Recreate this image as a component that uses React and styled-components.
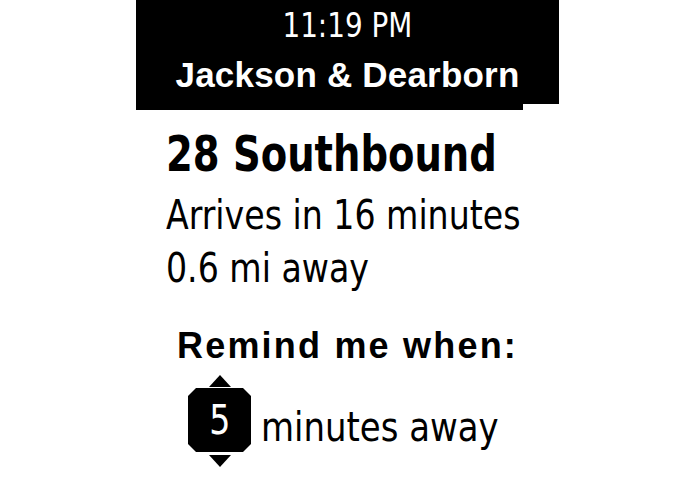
import React from "react";
import styled, { createGlobalStyle } from "styled-components";

const Global = createGlobalStyle`
  html, body { margin: 0; padding: 0; background: #fff; }
  body { font-family: "DejaVu Sans Condensed", "DejaVu Sans", sans-serif; }
`;

const Page = styled.div`
  width: 695px;
  height: 494px;
  display: flex;
  justify-content: center;
  background: #fff;
  overflow: hidden;
`;

const Screen = styled.div`
  width: 423px;
  height: 494px;
  flex-shrink: 0;
  display: flex;
  flex-direction: column;
  background: #fff;
  color: #000;
`;

const StatusBar = styled.header`
  flex-shrink: 0;
  height: 104px;
  background: #000;
  color: #fff;
  display: flex;
  flex-direction: column;
  align-items: center;
  padding-top: 8px;
  box-sizing: border-box;
`;

const StatusFoot = styled.div`
  flex-shrink: 0;
  width: 387px;
  height: 6px;
  background: #000;
`;

const Time = styled.div`
  font-family: "DejaVu Sans Condensed", "DejaVu Sans", sans-serif;
  font-size: 34px;
  line-height: 34px;
  white-space: nowrap;
  transform: scaleX(0.91);
  transform-origin: center;
`;

const Stop = styled.div`
  margin-top: 15px;
  font-family: "Liberation Sans", Arial, sans-serif;
  font-weight: 700;
  font-size: 35px;
  line-height: 35px;
  letter-spacing: 0.2px;
  white-space: nowrap;
`;

const Body = styled.main`
  flex-shrink: 0;
  display: flex;
  flex-direction: column;
  align-items: flex-start;
  padding: 19px 0 0 30px;
`;

const Route = styled.h1`
  margin: 0;
  font-family: "DejaVu Sans Condensed", "DejaVu Sans", sans-serif;
  font-weight: 700;
  font-size: 50px;
  line-height: 50px;
  white-space: nowrap;
  transform: scaleX(0.856);
  transform-origin: left center;
`;

const Info = styled.div`
  margin-top: 10px;
  font-family: "DejaVu Sans Condensed", "DejaVu Sans", sans-serif;
  font-size: 41px;
  line-height: 53px;
  white-space: nowrap;
  transform: scaleX(0.9);
  transform-origin: left center;
`;

const Remind = styled.h2`
  flex-shrink: 0;
  margin: 33px 0 0;
  align-self: center;
  font-family: "Liberation Sans", Arial, sans-serif;
  font-weight: 700;
  font-size: 36px;
  line-height: 36px;
  letter-spacing: 2.2px;
  white-space: nowrap;
`;

const ReminderRow = styled.div`
  flex-shrink: 0;
  margin-top: 11px;
  display: flex;
  align-items: flex-start;
  gap: 10px;
  padding-left: 52px;
`;

const Stepper = styled.div`
  display: flex;
  flex-direction: column;
  align-items: center;
  width: 63px;
`;

const Arrow = styled.div`
  width: 0;
  height: 0;
  border-left: 11px solid transparent;
  border-right: 11px solid transparent;
  ${(p) =>
    p.$dir === "up"
      ? "border-bottom: 12px solid #000; margin-bottom: 1px;"
      : "border-top: 12px solid #000; margin-top: 3px;"}
`;

const ValueBox = styled.div`
  width: 63px;
  height: 64px;
  background: #000;
  color: #fff;
  display: flex;
  align-items: center;
  justify-content: center;
  clip-path: polygon(8px 0, calc(100% - 8px) 0, 100% 8px, 100% calc(100% - 8px), calc(100% - 8px) 100%, 8px 100%, 0 calc(100% - 8px), 0 8px);
`;

const Digit = styled.span`
  font-family: "DejaVu Sans Condensed", "DejaVu Sans", sans-serif;
  font-size: 41px;
  line-height: 41px;
  transform: scaleX(0.9);
`;

const Unit = styled.span`
  margin-top: 32px;
  font-family: "DejaVu Sans Condensed", "DejaVu Sans", sans-serif;
  font-size: 41px;
  line-height: 41px;
  white-space: nowrap;
  transform: scaleX(0.92);
  transform-origin: left center;
`;

export default function App() {
  return (
    <>
      <Global />
      <Page>
        <Screen>
          <StatusBar>
            <Time>11:19 PM</Time>
            <Stop>Jackson &amp; Dearborn</Stop>
          </StatusBar>
          <StatusFoot />
          <Body>
            <Route>28 Southbound</Route>
            <Info>
              Arrives in 16 minutes
              <br />
              0.6 mi away
            </Info>
          </Body>
          <Remind>Remind me when:</Remind>
          <ReminderRow>
            <Stepper>
              <Arrow $dir="up" />
              <ValueBox>
                <Digit>5</Digit>
              </ValueBox>
              <Arrow $dir="down" />
            </Stepper>
            <Unit>minutes away</Unit>
          </ReminderRow>
        </Screen>
      </Page>
    </>
  );
}
